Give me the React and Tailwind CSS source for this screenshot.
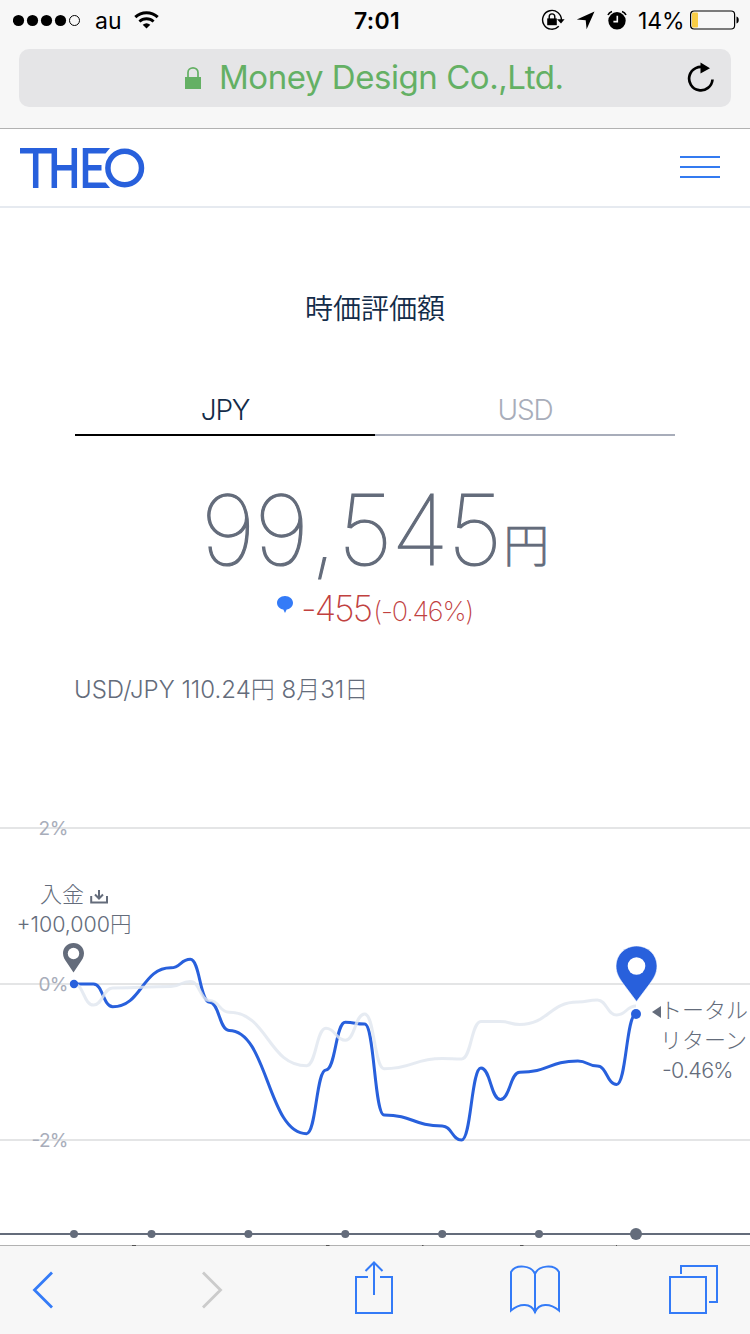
import React from 'react';

const latin = "font-['Inter','Noto_Sans_CJK_JP',sans-serif]";

const total = [
    [0, 984], [1, 984], [2, 1006.7], [5, 967.8], [6, 959.3], [7, 1002.3], [8, 1030.5], [12, 1133.7],
    [13, 1070], [14, 1022.3], [15, 1024], [16, 1115], [19, 1126], [20, 1140], [21, 1068], [22, 1099.5],
    [23, 1072.3], [26, 1061], [27, 1066], [28, 1084.5], [29, 1014],
];

const benchmark = [
    [0, 984], [1, 1005], [2, 988], [5, 986.5], [6, 981.5], [7, 1000.5], [8, 1012.3], [12, 1065.7],
    [13, 1028.3], [14, 1040.3], [15, 1014], [16, 1068.7], [19, 1058.5], [20, 1059], [21, 1021.5],
    [22, 1021.5], [23, 1024.5], [26, 1002], [27, 1000], [28, 1015], [29, 1006],
];

const dayX = (day) => 74 + day * 19.38;

const toPath = (points) =>
    points
        .map(([day, y], idx) => {
            const x = dayX(day);
            if (idx === 0) return `M${x} ${y}`;
            const [prevDay, prevY] = points[idx - 1];
            const mid = (dayX(prevDay) + x) / 2;
            return `C${mid} ${prevY} ${mid} ${y} ${x} ${y}`;
        })
        .join('');

const StatusBar = () => (
    <div className="h-10 flex items-center justify-between pl-[13px] pr-[11px] text-black font-['Inter',sans-serif] relative">
        <div className="flex items-center">
            <svg width="68" height="14" viewBox="0 0 68 14">
                {[5.5, 19.5, 33.5, 47.5].map((cx) => (
                    <circle key={cx} cx={cx} cy="7.5" r="5.6" />
                ))}
                <circle cx="61.5" cy="7.5" r="5" fill="none" stroke="#000" />
            </svg>
            <span className="ml-[14px] text-[23px] leading-10 w-[28px] pt-px">au</span>
            <svg className="ml-[11px]" width="26" height="20" viewBox="0 0 26 20" fill="none" stroke="#000">
                <path d="M1.3 7.2a16.5 16.5 0 0 1 22.4 0" strokeWidth="3" />
                <path d="M5.4 11.5a10.5 10.5 0 0 1 14.2 0" strokeWidth="2.8" />
                <path d="M8.7 14.8a5.8 5.8 0 0 1 7.6 0L12.5 18.6z" fill="#000" stroke="none" />
            </svg>
        </div>
        <span className="absolute left-[354px] top-0 text-[23px] leading-10 font-semibold tracking-[0.3px] pt-px">7:01</span>
        <div className="flex items-center">
            <svg width="24" height="22" viewBox="0 0 24 22" fill="none" stroke="#000" strokeWidth="1.4">
                <path d="M20.4 11A9.4 9.4 0 1 0 17.8 17.3" />
                <path d="M16 10.3h7.6l-3.6 4.2z" fill="#000" stroke="none" />
                <path d="M6.2 9.4h9.6v6.8H6.2z" fill="#000" stroke="none" />
                <path d="M8.2 10V7.7a2.8 2.8 0 0 1 5.6 0V10" />
            </svg>
            <svg className="ml-[11px]" width="20" height="20" viewBox="0 0 20 20">
                <path d="M18.5 1.5L10.6 19.2 9.7 10.2 .8 9.5z" />
            </svg>
            <svg className="ml-[11px]" width="20" height="20" viewBox="0 0 20 20">
                <circle cx="10" cy="10.8" r="8.7" />
                <path d="M10.3 5.8v5.8H6.4" stroke="#f7f7f7" strokeWidth="1.6" fill="none" />
                <path d="M1 5a6 6 0 0 1 4-3.6M19 5a6 6 0 0 0-4-3.6" stroke="#000" strokeWidth="1.6" fill="none" />
            </svg>
            <span className="ml-[11px] w-[46px] text-[23px] leading-10 tracking-[-0.1px] pt-px">14%</span>
            <svg className="ml-[6px]" width="49" height="20" viewBox="0 0 49 20">
                <rect x=".6" y="1" width="44" height="18" rx="3.5" fill="none" stroke="#000" strokeWidth="1.2" />
                <rect x="2" y="2.6" width="6" height="15" rx="1" fill="#f8cd46" />
                <path d="M46.5 6.5c3 .8 3 6.2 0 7z" />
            </svg>
        </div>
    </div>
);

const AddressBar = () => (
    <div className="h-[88px] pt-[9px] px-[19px]">
        <div className="h-[58px] rounded-[10px] bg-[#e5e5e7] flex items-center pl-[166px] pr-[16px]">
            <svg width="16" height="22" viewBox="0 0 16 22" fill="none">
                <rect x="0" y="10" width="16" height="12" fill="#64b064" />
                <path d="M3 10.5V5.5a5 4.6 0 0 1 10 0v5" stroke="#64b064" strokeWidth="1.7" />
            </svg>
            <span className="ml-[18px] text-[33px] text-[#64b064] font-['Inter',sans-serif] tracking-[-0.45px] leading-[56px] whitespace-nowrap pb-[3px]">
                Money Design Co.,Ltd.
            </span>
            <svg className="ml-auto mt-[-2px]" width="28" height="32" viewBox="0 0 28 32">
                <path d="M18.2 6.8A11.7 11.7 0 1 0 25.5 18.5" fill="none" stroke="#000" strokeWidth="2.7" />
                <path d="M13.5 1.5L23 7.2 13.5 12.5z" />
            </svg>
        </div>
    </div>
);

const SiteHeader = () => (
    <header className="h-[79px] border-b-2 border-[#e6eaf0] flex items-center justify-between pl-5 pr-[30px]">
        <svg width="125" height="40" viewBox="0 0 125 40" fill="none" stroke="#2860dc" role="img" aria-label="THEO">
            <path d="M0 2.7H37M15.7 2.5V40M34.3 0V40M54.3 0V40M34.3 19.8H54.3" strokeWidth="5.5" />
            <path d="M65.5 0V40M65.5 19.8H81.5" strokeWidth="5.5" />
            <path d="M63 0H90L85.5 5.4H63zM63 34.6H85.5L90 40H63z" fill="#2860dc" stroke="none" />
            <circle cx="104.7" cy="20" r="16.8" strokeWidth="5.5" />
        </svg>
        <div className="w-10 flex flex-col gap-2 -mt-[2px]">
            <div className="h-[2px] bg-[#347bf0]" />
            <div className="h-[2px] bg-[#347bf0]" />
            <div className="h-[2px] bg-[#347bf0]" />
        </div>
    </header>
);

const Valuation = () => (
    <section className={`h-[532px] px-[75px] text-[#646c7b] ${latin}`}>
        <h1 className="pt-[79px] text-center text-[28px] leading-[44px] font-[350] text-[#132c49]">時価評価額</h1>
        <div className="mt-[49px] flex text-[28px] font-light leading-[48px] text-center tracking-[-1.2px]">
            <div className="w-1/2 h-[56px] pt-[6px] border-b-2 border-black text-[#132c49]">JPY</div>
            <div className="w-1/2 h-[56px] pt-[6px] border-b-2 border-[#a8adba] text-[#a8adba]">USD</div>
        </div>
        <div className="mt-[43px] h-[102px] flex items-baseline justify-center whitespace-nowrap">
            <span className="text-[97px] leading-[102px] font-thin tracking-[-1.2px] [-webkit-text-stroke:1.2px_#646c7b]">
                99<span className="ml-[3px] mr-[2px]">,</span>545
            </span>
            <span className="ml-[2px] text-[46px] leading-[60px] font-light relative -top-[3px] [-webkit-text-stroke:0.5px_#646c7b]">円</span>
        </div>
        <div className="mt-[7px] h-[40px] flex items-baseline justify-center text-[#c1413f] whitespace-nowrap">
            <svg className="mr-2" width="16" height="25" viewBox="0 0 16 25">
                <path d="M8 0c4.5 0 8 3 8 6.8 0 3.5-2.7 6-6.3 6.8L8 17l-1.7-3.4C2.7 12.8 0 10.3 0 6.8 0 3 3.5 0 8 0z" fill="#347bf7" />
            </svg>
            <span className="text-[35px] leading-10 font-extralight tracking-[-1.8px]">-455</span>
            <span className="ml-[2px] text-[27px] leading-10 font-extralight tracking-[-1.2px]">(-0.46%)</span>
        </div>
        <p className="mt-[44px] -ml-px text-[24px] leading-[36px] font-light">USD/JPY 110.24円 8月31日</p>
    </section>
);

const Chart = () => (
    <svg className={`block ${latin}`} width="750" height="506" viewBox="0 740 750 506">
        {[828, 984, 1140].map((y) => (
            <path key={y} d={`M0 ${y}H750`} stroke="#e4e5e6" strokeWidth="2" />
        ))}
        <g fill="#a8adba" fontSize="19">
            <text x="38.5" y="835" textLength="30">2%</text>
            <text x="38.5" y="991" textLength="30">0%</text>
            <text x="31.5" y="1147" textLength="37">-2%</text>
        </g>

        <path d={toPath(total)} fill="none" stroke="#2860dc" strokeWidth="3" />
        <path d={toPath(benchmark)} fill="none" stroke="#e0e6ef" strokeOpacity=".8" strokeWidth="3" />
        <circle cx="74" cy="984" r="4.2" fill="#2860dc" />
        <circle cx="636" cy="1014" r="5" fill="#2860dc" />

        <g fill="#646c7b" fontSize="22" fontWeight="300">
            <text x="40" y="902">入金</text>
            <text x="16.5" y="932" fontSize="21.5" textLength="115" lengthAdjust="spacing">+100,000円</text>
            <text x="660" y="1018">トータル</text>
            <text x="660" y="1048">リターン</text>
            <text x="662" y="1078" fontSize="21.5" textLength="71.5" lengthAdjust="spacing">-0.46%</text>
        </g>
        <path d="M91.2 896V902.5H107V896M99 890V898M95 894.5L99 898.5 103 894.5" fill="none" stroke="#646c7b" strokeWidth="2" />
        <path d="M661 1006V1018L652 1012z" fill="#646c7b" />

        <path
            d="M73.5 943c6 0 10.5 4.6 10.5 10.3 0 4-2 6.7-3.8 9.3L73.5 972.5 66.8 962.6C65 960 63 957.3 63 953.3 63 947.6 67.5 943 73.5 943z"
            fill="#646c7b"
        />
        <circle cx="73.5" cy="953.5" r="5.7" fill="#fff" />
        <path
            d="M636.5 946c11.5 0 20.5 8.8 20.5 20 0 7.5-3.5 12.5-7 17.5L636.5 1001.5 623 983.5C619.5 978.5 616 973.5 616 966 616 954.8 625 946 636.5 946z"
            fill="#2860dc"
            stroke="#fff"
            strokeWidth=".6"
        />
        <circle cx="636.5" cy="966" r="8.8" fill="#fff" />

        <path d="M0 1234H750" stroke="#646c7b" strokeWidth="2" />
        <g fill="#646c7b">
            {[74, 151.5, 248.4, 345.3, 442.2, 539].map((cx) => (
                <circle key={cx} cx={cx} cy="1234" r="4" />
            ))}
            <circle cx="636" cy="1234" r="6" />
        </g>
        <path d="M132 1245.5h4M326 1245.5h3.5M422 1245.5h1.5M520 1245.5h3.5M616 1245.5h1" stroke="#777" />
    </svg>
);

const Toolbar = () => (
    <nav className="-mt-px h-[89px] relative border-t border-black/30">
        <div className="h-[88px] bg-[#f7f7f7] pl-[32px] flex items-center">
            <svg width="22" height="38" viewBox="0 0 22 38" fill="none" stroke="#347bf7" strokeWidth="2.8">
                <path d="M20 1.5L2.5 19 20 36.5" />
            </svg>
            <svg className="ml-[147px]" width="22" height="38" viewBox="0 0 22 38" fill="none" stroke="#cbcbcb" strokeWidth="2.8">
                <path d="M2 1.5L19.5 19 2 36.5" />
            </svg>
            <svg className="ml-[131px] -mt-[4px]" width="40" height="54" viewBox="0 0 40 54" fill="none" stroke="#347bf7" strokeWidth="2">
                <path d="M14 16H2V52H38V16H26M20 34V1.5M11.5 10L20 1.5 28.5 10" />
            </svg>
            <svg className="ml-[116px]" width="50" height="50" viewBox="0 0 50 50" fill="none" stroke="#347bf7" strokeWidth="2">
                <path d="M25 48V9C22 .5 6-1.5 1 7V45.5C10 38 21 38 25 47 29 38 40 38 49 45.5V7C44-1.5 28 .5 25 9" />
            </svg>
            <svg className="ml-[109px]" width="50" height="50" viewBox="0 0 50 50" fill="none" stroke="#347bf7" strokeWidth="2">
                <rect x="1" y="12" width="36" height="36" />
                <path d="M12 9V1H48V37H40" />
            </svg>
        </div>
    </nav>
);

const App = () => {
    return (
        <div className="w-[750px] h-[1334px] overflow-hidden bg-white">
            <div className="h-[129px] bg-[#f7f7f7] border-b border-[#b2b2b2]">
                <StatusBar />
                <AddressBar />
            </div>
            <SiteHeader />
            <Valuation />
            <Chart />
            <Toolbar />
        </div>
    );
};

export default App;
